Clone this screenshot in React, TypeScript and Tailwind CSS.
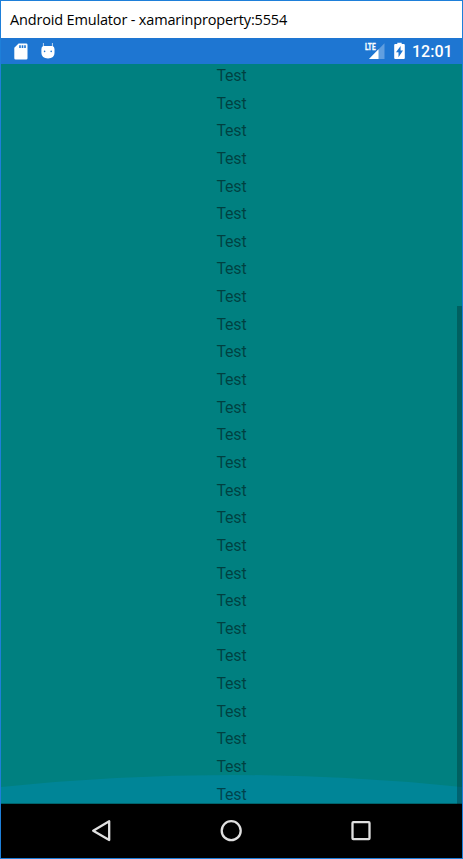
const rows = Array.from({ length: 27 }, (_, i) => i);

function StatusBar() {
  return (
    <div className="flex h-[26px] shrink-0 items-center justify-between bg-[#1e76d2] pr-[10px] pl-[13px] text-white">
      <div className="flex items-center gap-[13px]">
        <svg width="14" height="17" viewBox="0 0 14 17">
          <path
            fill="#fff"
            fillRule="evenodd"
            d="M4.6 0.5H12.2Q13.5 0.5 13.5 1.8V15.2Q13.5 16.5 12.2 16.5H1.6Q0.3 16.5 0.3 15.2V4.8ZM5.2 2.2V5H6.8V2.2ZM7.7 2.2V5H9.3V2.2ZM10.2 2.2V5H11.8V2.2Z"
          />
        </svg>
        <svg width="14" height="17" viewBox="0 0 14 17">
          <path d="M2.4 0V4M11.4 0V4" stroke="#fff" strokeWidth="1" opacity="0.7" />
          <path
            fill="#fff"
            fillRule="evenodd"
            d="M2.4 3H11.4Q13.5 3.6 13.5 6V10Q13.5 15.4 7 15.4T0.4 10V6Q0.4 3.6 2.4 3ZM2.8 8.4A.8.8 0 1 0 4.4 8.4 .8.8 0 1 0 2.8 8.4ZM9.4 8.4A.8.8 0 1 0 11 8.4 .8.8 0 1 0 9.4 8.4Z"
          />
        </svg>
      </div>
      <div className="flex items-center">
        <svg width="21" height="18" viewBox="0 0 21 18">
          <path d="M20.5 1.2V17H5Z" fill="#fff" opacity="0.3" />
          <path d="M14.5 7.3V17H5Z" fill="#fff" />
          <path d="M0 0H12V8H0Z" fill="#1e76d2" />
          <text x="1" y="7.9" fill="#fff" stroke="#fff" strokeWidth="0.3" fontSize="9" fontWeight="700" textLength="10.6" lengthAdjust="spacingAndGlyphs" fontFamily="Roboto, sans-serif">
            LTE
          </text>
        </svg>
        <svg className="ml-[9px]" width="11" height="18" viewBox="0 0 11 18">
          <path
            fill="#fff"
            fillRule="evenodd"
            d="M3.3 0.8H7.7V2H9.8Q10.8 2 10.8 3V16Q10.8 17 9.8 17H1.2Q0.2 17 0.2 16V3Q0.2 2 1.2 2H3.3ZM6.6 4 2 10.3H4.5V15.2L9 8.6H6.6Z"
          />
        </svg>
        <span className="ml-[7px] w-[40px] pt-[2px] text-right font-['Roboto',sans-serif] text-[16px] leading-[26px] font-medium whitespace-nowrap">
          12:01
        </span>
      </div>
    </div>
  );
}

function NavigationBar() {
  return (
    <div className="flex h-[54px] shrink-0 items-center justify-center bg-black pr-[2px]">
      <svg width="280" height="30" viewBox="0 0 280 30" fill="none" stroke="#e0e0e0" strokeWidth="2.3">
        <path d="M18.2 5.3V24.1L2.2 14.7Z" strokeLinejoin="round" />
        <circle cx="140.2" cy="14.7" r="9.5" />
        <rect x="261.5" y="6.1" width="17" height="17" rx="0.8" />
      </svg>
    </div>
  );
}

export default function App() {
  return (
    <div className="flex h-[859px] w-[463px] flex-col overflow-hidden border border-[#1e7fd9] bg-black">
      <header className="flex h-[37px] shrink-0 items-center bg-white pl-[9px]">
        <h1 className="font-['Open_Sans','Noto_Sans',sans-serif] text-[14.5px] leading-[20px] tracking-[-0.165px] whitespace-nowrap text-black">
          Android Emulator - xamarinproperty:5554
        </h1>
      </header>
      <StatusBar />
      <main className="relative h-[740px] shrink-0 overflow-hidden bg-[#008080]">
        <svg className="absolute bottom-0 left-0" width="461" height="30" viewBox="0 0 461 30">
          <path d="M0 13Q230.5-11 461 13V30H0Z" fill="#0088aa" opacity="0.55" />
          <path d="M0 29.5H461" stroke="#00636c" />
        </svg>
        <ul className="relative -mt-[2px] text-center font-['Roboto',sans-serif] text-[16px] tracking-[-0.2px] text-black/50">
          {rows.map((row) => (
            <li key={row} className="h-[27.65px] leading-[27.65px]">
              Test
            </li>
          ))}
        </ul>
        <div className="absolute right-0 bottom-0 h-[498px] w-[5px] bg-black/25" />
      </main>
      <NavigationBar />
    </div>
  );
}
